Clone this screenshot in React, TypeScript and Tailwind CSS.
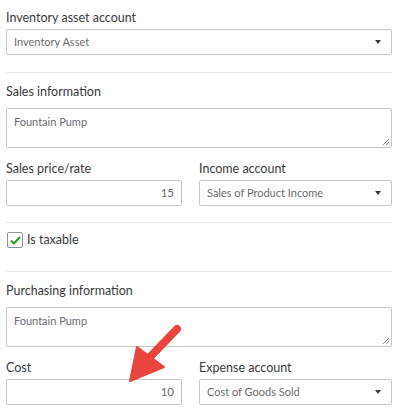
import { ReactNode } from 'react';

function Label({ children, className = '' }: { children: ReactNode; className?: string }) {
  return <div className={`h-4 text-[12.5px] leading-4 text-[#393a3d] ${className}`}>{children}</div>;
}

function SelectBox({ value }: { value: string }) {
  return (
    <div className="flex h-[26px] items-center justify-between rounded-[2px] border border-[#c4c6ca] bg-white pl-[7px] pr-[10px] text-[11px] text-[#6b6c72]">
      <span>{value}</span>
      <svg width="6" height="4" viewBox="0 0 6 4">
        <path d="M0 0 H6 L3 4 Z" fill="#393a3d" />
      </svg>
    </div>
  );
}

function NumberBox({ value }: { value: string }) {
  return (
    <div className="flex h-[26px] items-center justify-end rounded-[2px] border border-[#c4c6ca] bg-white pr-[7px] text-[11.5px] text-[#6b6c72]">
      {value}
    </div>
  );
}

function TextArea({ value }: { value: string }) {
  return (
    <div className="relative h-[40px] rounded-[2px] border border-[#c4c6ca] bg-white px-[7px] pt-[5px] text-[11px] text-[#6b6c72]">
      {value}
      <svg className="absolute bottom-[2px] right-[2px]" width="7" height="7" viewBox="0 0 7 7">
        <path d="M7 1 L1 7 M7 4 L4 7" stroke="#8d9096" strokeWidth="1" />
      </svg>
    </div>
  );
}

function Divider() {
  return <div className="h-px bg-[#e3e5e8]" />;
}

export default function App() {
  return (
    <div
      className="relative h-[410px] w-[398px] overflow-hidden bg-white pl-[6px] pr-[6px]"
      style={{ fontFamily: 'Lato, "Open Sans", sans-serif' }}
    >
      <div className="pt-[10px]">
        <Label>Inventory asset account</Label>
        <div className="mt-[3px]">
          <SelectBox value="Inventory Asset" />
        </div>
      </div>

      <div className="mt-[17px]">
        <Divider />
      </div>

      <div className="pt-[11px]">
        <Label>Sales information</Label>
        <div className="mt-[8px]">
          <TextArea value="Fountain Pump" />
        </div>
        <div className="mt-[13px] grid grid-cols-[176px_1fr] gap-x-[17px]">
          <div>
            <Label>Sales price/rate</Label>
            <div className="mt-[3px]">
              <NumberBox value="15" />
            </div>
          </div>
          <div>
            <Label>Income account</Label>
            <div className="mt-[3px]">
              <SelectBox value="Sales of Product Income" />
            </div>
          </div>
        </div>
      </div>

      <div className="mt-[16px]">
        <Divider />
      </div>

      <div className="flex h-[16px] items-center gap-[4px] pl-[1px] mt-[9px]">
        <div className="flex h-[16px] w-[16px] items-center justify-center rounded-[2px] border border-[#8d9096] bg-white">
          <svg width="11" height="9" viewBox="0 0 11 9">
            <path d="M1 4.5 L4 7.5 L10 1" fill="none" stroke="#2ca01c" strokeWidth="2" />
          </svg>
        </div>
        <span className="text-[12.5px] text-[#393a3d]">Is taxable</span>
      </div>

      <div className="mt-[23px]">
        <Divider />
      </div>

      <div className="pt-[11px]">
        <Label>Purchasing information</Label>
        <div className="mt-[8px]">
          <TextArea value="Fountain Pump" />
        </div>
        <div className="mt-[13px] grid grid-cols-[176px_1fr] gap-x-[17px]">
          <div>
            <Label>Cost</Label>
            <div className="mt-[3px]">
              <NumberBox value="10" />
            </div>
          </div>
          <div>
            <Label>Expense account</Label>
            <div className="mt-[3px]">
              <SelectBox value="Cost of Goods Sold" />
            </div>
          </div>
        </div>
      </div>

      <svg className="absolute left-0 top-0" width="398" height="410" viewBox="0 0 398 410">
        <line x1="177" y1="329" x2="150" y2="357" stroke="#e8463d" strokeWidth="8" strokeLinecap="round" />
        <path d="M130 381 L137 347 L164 367 Z" fill="#e8463d" stroke="#e8463d" strokeWidth="2" strokeLinejoin="round" />
      </svg>
    </div>
  );
}
